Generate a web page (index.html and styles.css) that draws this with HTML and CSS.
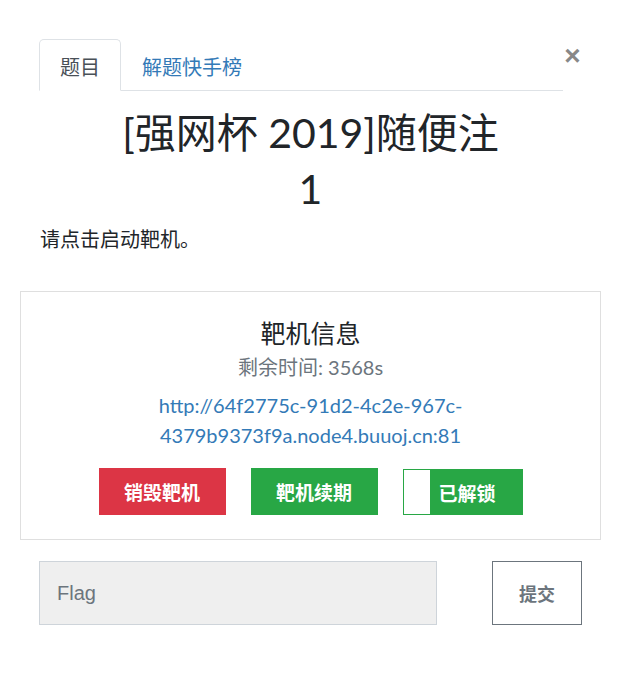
FILE: index.html
```html
<!DOCTYPE html>
<html lang="zh-CN">
<head>
    <meta charset="UTF-8">
    <meta name="viewport" content="width=device-width, initial-scale=1.0">
    <title>[强网杯 2019]随便注</title>
    <link rel="stylesheet" href="styles.css">
</head>
<body>
    <div class="modal">
        <div class="top">
            <ul class="tabs">
                <li class="tab active">题目</li>
                <li class="tab"><a href="#">解题快手榜</a></li>
            </ul>
            <button class="close" type="button">&times;</button>
        </div>

        <h1 class="title">[强网杯 2019]随便注<br>1</h1>
        <p class="desc">请点击启动靶机。</p>

        <div class="target-box">
            <h3>靶机信息</h3>
            <div class="time-left">剩余时间: 3568s</div>
            <a class="target-url" href="#">http://64f2775c-91d2-4c2e-967c-4379b9373f9a.node4.buuoj.cn:81</a>
            <div class="actions">
                <button class="btn btn-red">销毁靶机</button>
                <button class="btn btn-green">靶机续期</button>
                <button class="btn btn-green btn-unlocked"><span class="knob"></span><span>已解锁</span></button>
            </div>
        </div>

        <form class="flag-form">
            <input type="text" class="flag-input" placeholder="Flag">
            <button type="submit" class="btn-submit">提交</button>
        </form>
    </div>
</body>
</html>
```

FILE: styles.css
```css
body {
    margin: 0;
    font-family: Lato, "Noto Sans CJK SC", sans-serif;
    color: #212529;
    background-color: #fff;
}
.modal {
    padding: 39px 39px 0;
}
.top {
    display: flex;
    align-items: flex-start;
}
.tabs {
    flex: 1;
    display: flex;
    list-style: none;
    margin: 0;
    padding: 0;
    border-bottom: 1px solid #dee2e6;
}
.tab {
    padding: 14px 20px 9px;
    margin-bottom: -1px;
    font-size: 20px;
    line-height: 27px;
    border: 1px solid transparent;
    border-radius: 5px 5px 0 0;
}
.tab.active {
    color: #495057;
    border-color: #dee2e6 #dee2e6 #fff;
}
.tab a {
    color: #337ab7;
    text-decoration: none;
}
.close {
    width: 19px;
    padding: 0;
    border: none;
    background: none;
    font-family: "Liberation Sans", sans-serif;
    font-size: 28px;
    font-weight: bold;
    line-height: 34px;
    color: #888;
    cursor: pointer;
}
.title {
    margin: 14px 0 0;
    text-align: center;
    font-size: 41px;
    font-weight: 400;
    line-height: 56px;
}
.desc {
    margin: 7px 0 0;
    padding-left: 1px;
    font-size: 20px;
    line-height: 30px;
}
.target-box {
    margin: 37px -19px 0;
    padding: 27px 20px 24px;
    border: 1px solid #dfdfdf;
    text-align: center;
}
.target-box h3 {
    margin: 0;
    font-size: 25px;
    font-weight: 400;
    line-height: 29px;
}
.time-left {
    margin-top: 4px;
    font-size: 20px;
    line-height: 30px;
    color: #6c757d;
}
.target-url {
    display: block;
    margin: 8px auto 0;
    max-width: 340px;
    font-size: 20px;
    line-height: 30px;
    color: #337ab7;
    text-decoration: none;
}
.actions {
    display: flex;
    justify-content: center;
    gap: 25px;
    margin-top: 18px;
}
.btn {
    display: flex;
    align-items: center;
    justify-content: center;
    width: 127px;
    height: 47px;
    padding: 0;
    border: 1px solid transparent;
    font-family: Lato, "Noto Sans CJK SC", sans-serif;
    font-size: 19px;
    font-weight: bold;
    color: #fff;
    cursor: pointer;
}
.btn-red {
    background-color: #dc3545;
}
.btn-green {
    background-color: #28a745;
}
.btn-unlocked {
    width: 120px;
    height: 46px;
    margin-top: 1px;
    justify-content: flex-start;
    border-color: #28a745;
}
.btn-unlocked .knob {
    width: 26px;
    height: 100%;
    margin-right: 9px;
    background-color: #fff;
}
.flag-form {
    display: flex;
    justify-content: space-between;
    margin-top: 21px;
}
.flag-input {
    width: 398px;
    height: 64px;
    box-sizing: border-box;
    padding: 0 17px;
    border: 1px solid #ced4da;
    background-color: #efefef;
    font-family: "Liberation Sans", sans-serif;
    font-size: 20px;
    color: #495057;
}
.flag-input::placeholder {
    color: #6c757d;
}
.btn-submit {
    width: 90px;
    height: 64px;
    border: 1px solid #6c757d;
    background-color: #fff;
    font-family: Lato, "Noto Sans CJK SC", sans-serif;
    font-size: 18px;
    font-weight: bold;
    color: #6c757d;
    cursor: pointer;
}
```
